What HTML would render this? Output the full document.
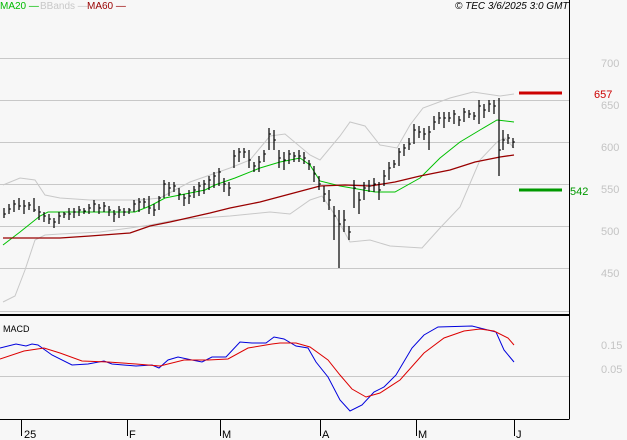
<!DOCTYPE html>
<html><head><style>
body{margin:0;background:#f7f7f7;}
svg{display:block;font-family:"Liberation Sans",sans-serif;}
</style></head><body>
<svg width="627" height="440" viewBox="0 0 627 440">
<rect width="627" height="440" fill="#f7f7f7"/>
<g stroke="#c8c8c8" stroke-width="1">
<path d="M0 58.5H569M0 100.5H569M0 142.5H569M0 184.5H569M0 226.5H569M0 268.5H569M0 311.5H569M0 376.5H569"/>
</g>
<g font-size="11" fill="#c4c4c4">
<text x="601" y="67">700</text><text x="601" y="109">650</text><text x="601" y="151">600</text>
<text x="601" y="193">550</text><text x="601" y="235">500</text><text x="601" y="277">450</text>
<text x="601" y="349">0.15</text><text x="601" y="373">0.05</text>
</g>
<g fill="none" stroke-width="1">
<polyline stroke="#c8c8c8" points="3,185 20,178 35,180 45,195 60,198 90,200 140,200 160,198 190,182 230,168 250,160 270,136 285,134 310,155 320,160 340,136 350,122 365,126 380,145 397,148 410,125 423,108 450,98 473,92 500,96 514,94"/>
<polyline stroke="#c8c8c8" points="3,302 15,296 25,270 35,240 45,235 60,234 100,232 130,228 150,225 175,220 200,218 230,216 250,214 270,212 290,214 310,200 322,196 335,215 350,242 370,240 390,246 422,248 440,228 460,207 480,160 497,142 505,138 514,148"/>
<polyline stroke="#00c000" points="3,245 20,232 40,216 48,212 135,212 150,206 165,198 205,190 215,185 235,178 260,168 280,162 300,158 310,165 320,181 340,186 375,192 395,192 420,178 440,158 460,142 480,130 497,120 514,122"/>
<polyline stroke="#990000" stroke-width="1.3" points="3,238 60,238 90,236 130,233 150,226 170,222 210,213 230,208 260,202 290,194 320,186 345,185 370,186 395,182 420,176 450,170 475,162 500,157 514,155"/>
<path stroke="#000" stroke-width="1.2" d="M4 208v10M9 204v10M14 200v12M19 198v12M24 200v14M29 202v8M34 198v14M39 206v14M44 212v10M49 214v10M54 218v10M59 212v12M64 212v6M69 208v12M74 208v10M79 206v10M84 208v6M89 204v10M94 200v12M99 204v10M104 202v10M109 206v10M114 210v12M119 206v12M124 208v8M129 208v6M134 200v12M139 198v14M144 198v10M149 196v18M154 204v12M159 196v14M164 180v18M169 182v14M174 182v10M179 188v12M184 194v12M189 190v14M194 186v12M199 182v14M204 180v14M209 176v14M214 172v16M219 168v18M224 178v14M229 182v14M234 150v18M239 148v14M244 148v10M249 150v18M254 162v10M259 156v16M264 150v12M269 128v22M274 130v20M279 150v18M284 152v18M289 150v14M294 152v10M299 150v12M304 152v12M309 160v10M314 166v16M319 176v14M324 186v16M329 190v20M334 206v34M339 210v58M344 210v22M349 226v14M354 180v28M359 192v22M364 182v18M369 180v12M374 178v14M379 182v18M384 170v16M389 162v18M394 160v8M399 148v18M404 144v12M409 138v12M414 124v20M419 126v12M424 128v12M429 126v24M434 116v14M439 112v12M444 112v16M449 112v10M454 110v14M459 116v10M464 108v14M469 110v8M474 112v8M479 100v24M484 104v14M489 100v12M494 100v14M499 98v78M503 130v20M508 134v10M513 138v10"/>
<path stroke="#000" d="M4 214h2M9 209h2M14 204h2M19 206h2M24 206h2M29 205h2M34 210h2M39 212h2M44 216h2M49 219h2M54 222h2M59 216h2M64 214h2M69 214h2M74 212h2M79 210h2M84 211h2M89 208h2M94 204h2M99 208h2M104 206h2M109 210h2M114 214h2M119 210h2M124 212h2M129 210h2M134 204h2M139 202h2M144 202h2M149 208h2M154 210h2M159 198h2M164 184h2M169 188h2M174 186h2M179 194h2M184 198h2M189 196h2M194 190h2M199 186h2M204 184h2M209 180h2M214 176h2M219 172h2M224 184h2M229 188h2M234 156h2M239 152h2M244 152h2M249 160h2M254 166h2M259 162h2M264 154h2M269 134h2M274 140h2M279 158h2M284 160h2M289 154h2M294 156h2M299 156h2M304 158h2M309 164h2M314 174h2M319 184h2M324 194h2M329 200h2M334 216h2M339 224h2M344 220h2M349 232h2M354 188h2M359 200h2M364 188h2M369 186h2M374 184h2M379 190h2M384 176h2M389 168h2M394 164h2M399 152h2M404 148h2M409 144h2M414 130h2M419 132h2M424 134h2M429 132h2M434 122h2M439 118h2M444 118h2M449 118h2M454 114h2M459 120h2M464 112h2M469 114h2M474 116h2M479 106h2M484 110h2M489 104h2M494 106h2M499 150h2M503 140h2M508 138h2M513 142h2"/>
</g>
<path d="M519 93H562" stroke="#cc0000" stroke-width="3"/>
<path d="M519 190H562" stroke="#009900" stroke-width="3"/>
<text x="594" y="98" font-size="11" fill="#cc0000">657</text>
<text x="570" y="195" font-size="11" fill="#009900">542</text>
<path d="M569.5 0V419" stroke="#000" stroke-width="1"/>
<path d="M0 315H569" stroke="#000" stroke-width="2"/>
<path d="M0 419.5H569.5" stroke="#000" stroke-width="1"/>
<text x="3" y="332" font-size="9" fill="#000">MACD</text>
<polyline fill="none" stroke="#0000dd" points="0,348 16,344 26,346 32,344 38,345 52,355 72,365 88,364 104,361 112,364 136,366 152,365 159,368 168,360 178,357 192,360 202,362 212,357 226,357 240,342 252,343 266,343 274,337 284,339 296,346 308,348 316,362 328,377 340,400 350,411 362,405 374,392 384,387 396,375 412,348 424,335 438,327 472,326 496,332 504,350 514,362"/>
<polyline fill="none" stroke="#dd0000" points="0,359 24,351 44,348 60,353 82,361 108,362 136,364 160,366 184,360 208,360 228,359 248,348 272,344 280,343 296,343 310,347 328,360 340,375 352,389 366,397 380,393 400,380 424,353 444,338 464,331 480,329 494,331 508,338 514,345"/>
<path d="M21.5 420V436M127.5 420V436M220.5 420V436M320.5 420V436M416.5 420V436M514.5 420V436" stroke="#000"/>
<g font-size="11" fill="#000">
<text x="24" y="438">25</text><text x="129" y="438">F</text><text x="222" y="438">M</text>
<text x="322" y="438">A</text><text x="418" y="438">M</text><text x="516" y="438">J</text>
</g>
<g font-size="10">
<text x="0" y="9" fill="#00bb00">MA20 —</text>
<text x="40" y="9" fill="#c8c8c8">BBands —</text>
<text x="87" y="9" fill="#990000">MA60 —</text>
<text x="455" y="9" fill="#000" font-style="italic">© TEC 3/6/2025 3:0 GMT</text>
</g>
</svg>
</body></html>
